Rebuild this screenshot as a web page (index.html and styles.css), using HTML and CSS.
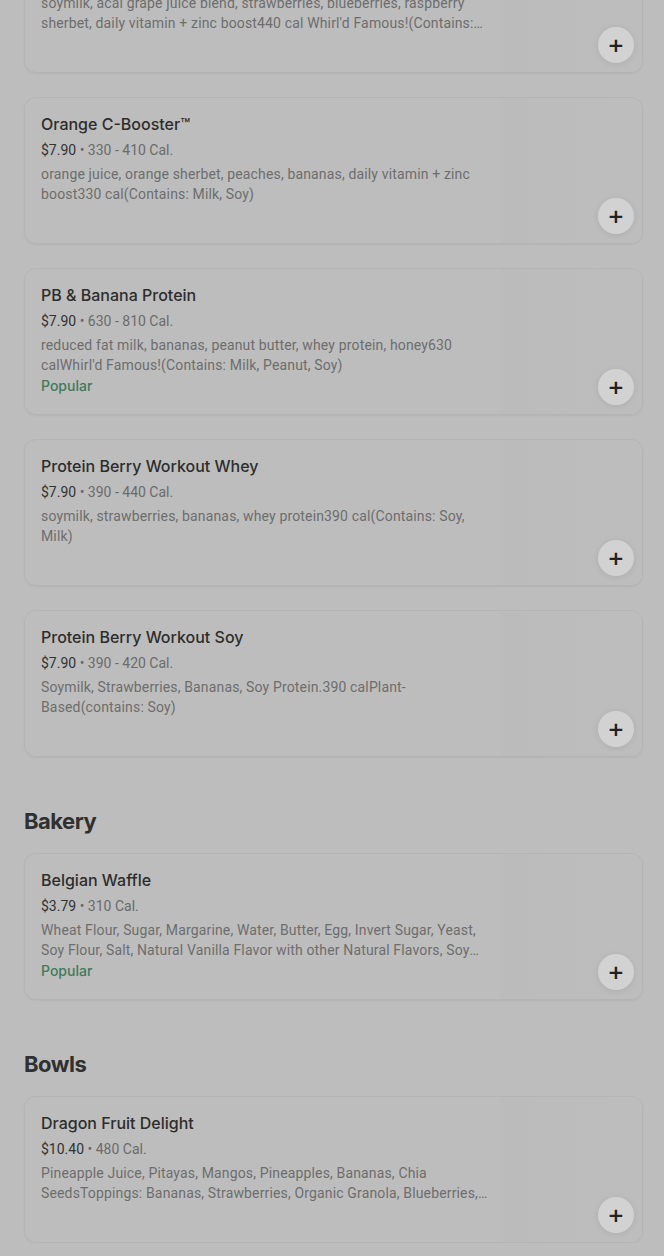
FILE: index.html
```html
<!DOCTYPE html>
<html lang="en">
<head>
    <meta charset="UTF-8">
    <meta name="viewport" content="width=device-width, initial-scale=1.0">
    <title>Menu</title>
    <link rel="stylesheet" href="styles.css">
</head>
<body>
    <div class="menu">
        <section class="category first">
            <div class="item">
                <div class="info">
                    <h3>Açaí Super-Antioxidant™</h3>
                    <p class="price"><b>$7.90</b> • 440 - 520 Cal.</p>
                    <p class="desc">soymilk, acai grape juice blend, strawberries, blueberries, raspberry sherbet, daily vitamin + zinc boost440 cal Whirl'd Famous!(Contains: Milk, Soy)</p>
                </div>
                <div class="pic"></div>
                <button class="add">+</button>
            </div>

            <div class="item">
                <div class="info">
                    <h3>Orange C-Booster™</h3>
                    <p class="price"><b>$7.90</b> • 330 - 410 Cal.</p>
                    <p class="desc">orange juice, orange sherbet, peaches, bananas, daily vitamin + zinc boost330 cal(Contains: Milk, Soy)</p>
                </div>
                <div class="pic"></div>
                <button class="add">+</button>
            </div>

            <div class="item">
                <div class="info">
                    <h3>PB &amp; Banana Protein</h3>
                    <p class="price"><b>$7.90</b> • 630 - 810 Cal.</p>
                    <p class="desc">reduced fat milk, bananas, peanut butter, whey protein, honey630 calWhirl'd Famous!(Contains: Milk, Peanut, Soy)</p>
                    <p class="popular">Popular</p>
                </div>
                <div class="pic"></div>
                <button class="add">+</button>
            </div>

            <div class="item">
                <div class="info">
                    <h3>Protein Berry Workout Whey</h3>
                    <p class="price"><b>$7.90</b> • 390 - 440 Cal.</p>
                    <p class="desc">soymilk, strawberries, bananas, whey protein390 cal(Contains: Soy, Milk)</p>
                </div>
                <div class="pic"></div>
                <button class="add">+</button>
            </div>

            <div class="item">
                <div class="info">
                    <h3>Protein Berry Workout Soy</h3>
                    <p class="price"><b>$7.90</b> • 390 - 420 Cal.</p>
                    <p class="desc">Soymilk, Strawberries, Bananas, Soy Protein.390 calPlant-Based(contains: Soy)</p>
                </div>
                <div class="pic"></div>
                <button class="add">+</button>
            </div>
        </section>

        <section class="category">
            <h2>Bakery</h2>
            <div class="item">
                <div class="info">
                    <h3>Belgian Waffle</h3>
                    <p class="price"><b>$3.79</b> • 310 Cal.</p>
                    <p class="desc">Wheat Flour, Sugar, Margarine, Water, Butter, Egg, Invert Sugar, Yeast, Soy Flour, Salt, Natural Vanilla Flavor with other Natural Flavors, Soy Lecithin(Contains: Wheat, Milk, Egg, Soy)</p>
                    <p class="popular">Popular</p>
                </div>
                <div class="pic"></div>
                <button class="add">+</button>
            </div>
        </section>

        <section class="category">
            <h2>Bowls</h2>
            <div class="item">
                <div class="info">
                    <h3>Dragon Fruit Delight</h3>
                    <p class="price"><b>$10.40</b> • 480 Cal.</p>
                    <p class="desc">Pineapple Juice, Pitayas, Mangos, Pineapples, Bananas, Chia SeedsToppings: Bananas, Strawberries, Organic Granola, Blueberries, Coconut</p>
                </div>
                <div class="pic"></div>
                <button class="add">+</button>
            </div>
        </section>
    </div>
</body>
</html>
```

FILE: styles.css
```css
body{
    margin: 0;
    background-color: #bdbdbd;
    font-family: Inter, "Noto Sans", sans-serif;
    color: #2b2b2b;
    overflow: hidden;
}
.menu{
    padding: 0 21px 0 24px;
    margin-top: -74px;
}
.category{
    display: flex;
    flex-direction: column;
    gap: 24px;
    margin-top: 50px;
}
.category.first{
    margin-top: 0;
}
h2{
    margin: 0 0 -6px;
    font-size: 22px;
    line-height: 28px;
    font-weight: 700;
    letter-spacing: -0.5px;
    color: #303030;
}
.item{
    position: relative;
    display: flex;
    height: 147px;
    box-sizing: border-box;
    border: 1px solid #b4b4b4;
    border-radius: 12px;
    box-shadow: 0 1px 2px rgba(0, 0, 0, 0.05);
    overflow: hidden;
}
.info{
    flex: 1;
    padding: 15px 12px 0 16px;
    min-width: 0;
}
.pic{
    width: 142px;
    background: linear-gradient(to right, #bbbbbb, #bcbcbc 30%, #bdbdbd);
}
h3{
    margin: 0;
    font-size: 16px;
    line-height: 22px;
    font-weight: 500;
    color: #2d2d2d;
}
p{
    margin: 0;
    font-family: Roboto, "Noto Sans", sans-serif;
    font-size: 14px;
    line-height: 20px;
}
.price{
    margin-top: 5px;
    color: #6b6b6b;
}
.price b{
    font-weight: 400;
    color: #333333;
}
.desc{
    margin-top: 4px;
    color: #6d6d6d;
    letter-spacing: 0.15px;
    display: -webkit-box;
    -webkit-line-clamp: 2;
    -webkit-box-orient: vertical;
    overflow: hidden;
}
.popular{
    margin-top: 1px;
    color: #3f7a5a;
    font-family: Inter, "Noto Sans", sans-serif;
    font-weight: 500;
}
.add{
    position: absolute;
    right: 8px;
    bottom: 9px;
    width: 36px;
    height: 36px;
    border: none;
    border-radius: 50%;
    background-color: #d2d2d2;
    box-shadow: 0 1px 6px rgba(0, 0, 0, 0.08);
    color: #222222;
    font-family: "DejaVu Sans", sans-serif;
    font-size: 20px;
    font-weight: 700;
    line-height: 36px;
    padding: 0;
}
```
